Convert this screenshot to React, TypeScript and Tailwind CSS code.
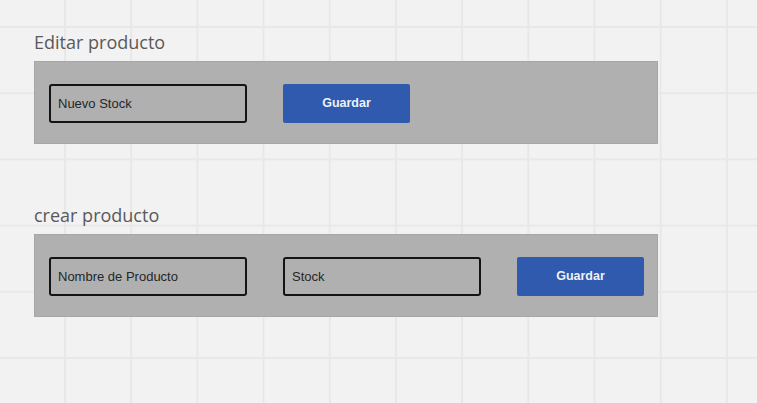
import React from "react";

function Field({ label }: { label: string }) {
  return (
    <div className="flex h-[39px] w-[198px] items-center rounded-[3px] border-2 border-[#141414] pl-[7px] font-['Liberation_Sans',Arial,sans-serif] text-[13px] text-[#262626]">
      {label}
    </div>
  );
}

function SaveButton() {
  return (
    <button className="flex h-[39px] w-[127px] items-center justify-center rounded-[2px] bg-[#2f5aad] font-['Liberation_Sans',Arial,sans-serif] text-[12.5px] font-bold text-[#eef1f8]">
      Guardar
    </button>
  );
}

function Section({ title, fields, className = "" }: { title: string; fields: string[]; className?: string }) {
  return (
    <div className={className}>
      <div className="h-[24px] font-['Open_Sans',sans-serif] text-[18px] leading-[24px] text-[#595959]">{title}</div>
      <div className="mt-[7px] flex h-[83px] w-[624px] items-start gap-9 border border-[#a6a6a6] bg-[#b0b0b0] pl-[14px] pt-[22px]">
        {fields.map((f) => (
          <Field key={f} label={f} />
        ))}
        <SaveButton />
      </div>
    </div>
  );
}

export default function App() {
  return (
    <div className="h-[403px] w-[757px] overflow-hidden bg-[#f2f2f2] bg-[linear-gradient(to_right,#e8e8e8_2px,transparent_2px),linear-gradient(to_bottom,#e8e8e8_2px,transparent_2px)] bg-[size:66.2px_66.2px] bg-[position:64px_26px] pl-[34px] pt-[30px]">
      <Section title="Editar producto" fields={["Nuevo Stock"]} />
      <Section className="mt-[59px]" title="crear producto" fields={["Nombre de Producto", "Stock"]} />
    </div>
  );
}
